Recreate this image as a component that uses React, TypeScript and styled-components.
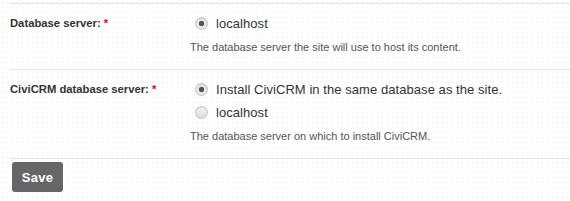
import styled, { createGlobalStyle } from "styled-components"

const GlobalStyle = createGlobalStyle`
  html, body {
    margin: 0;
    padding: 0;
    background-color: #fff;
    background-image: radial-gradient(circle, #ececec 0.6px, transparent 0.8px);
    background-size: 5px 5px;
  }
  body {
    font-family: "Liberation Sans", Arial, sans-serif;
    color: #333;
  }
`

interface Option {
  label: string
  checked: boolean
}

interface FieldProps {
  label: string
  options: Option[]
  description: string
}

const Field = ({ label, options, description }: FieldProps) => (
  <Row>
    <Label>
      {label} <Required>*</Required>
    </Label>
    <Controls>
      {options.map((opt) => (
        <RadioLine key={opt.label}>
          <Radio checked={opt.checked} />
          <RadioText>{opt.label}</RadioText>
        </RadioLine>
      ))}
      <Description>{description}</Description>
    </Controls>
  </Row>
)

export default function App() {
  return (
    <>
      <GlobalStyle />
      <Form>
        <Field
          label="Database server:"
          options={[{ label: "localhost", checked: true }]}
          description="The database server the site will use to host its content."
        />
        <Field
          label="CiviCRM database server:"
          options={[
            { label: "Install CiviCRM in the same database as the site.", checked: true },
            { label: "localhost", checked: false },
          ]}
          description="The database server on which to install CiviCRM."
        />
        <Actions>
          <SaveButton>Save</SaveButton>
        </Actions>
      </Form>
    </>
  )
}

const Form = styled.div`
  padding: 3px 0 0 10px;
`

const Row = styled.div`
  display: grid;
  grid-template-columns: 180px 1fr;
  border-top: 1px solid #e4e4e4;
  padding: 10px 0 15px;
`

const Label = styled.div`
  font-size: 11.25px;
  font-weight: bold;
  color: #333;
  line-height: 18px;
`

const Required = styled.span`
  color: #e00;
`

const Controls = styled.div`
  display: flex;
  flex-direction: column;
`

const RadioLine = styled.label`
  display: flex;
  align-items: center;
  height: 23px;
  &:first-child {
    margin-top: -2px;
  }
`

const Radio = styled.span<{ checked: boolean }>`
  box-sizing: border-box;
  width: 13px;
  height: 13px;
  border-radius: 50%;
  margin-left: 5px;
  margin-right: 8px;
  border: 1px solid #c4c4c4;
  background: ${({ checked }) =>
    checked
      ? "radial-gradient(circle, #555 0 2.5px, #e8e8e8 3px)"
      : "linear-gradient(#f4f4f4, #dcdcdc)"};
  box-shadow: inset 0 1px 1px rgba(0, 0, 0, 0.08);
`

const RadioText = styled.span`
  font-size: 13px;
  letter-spacing: 0.06px;
  color: #333;
`

const Description = styled.div`
  font-size: 11px;
  color: #555;
  margin-top: 5px;
  line-height: 14px;
`

const Actions = styled.div`
  border-top: 1px solid #e4e4e4;
  padding: 3px 0 0 2px;
`

const SaveButton = styled.button`
  font-family: "Liberation Sans", Arial, sans-serif;
  font-size: 13px;
  font-weight: bold;
  color: #fff;
  background: #666;
  border: none;
  border-radius: 3px;
  width: 51px;
  height: 30px;
  padding: 0;
  letter-spacing: 0.3px;
`
